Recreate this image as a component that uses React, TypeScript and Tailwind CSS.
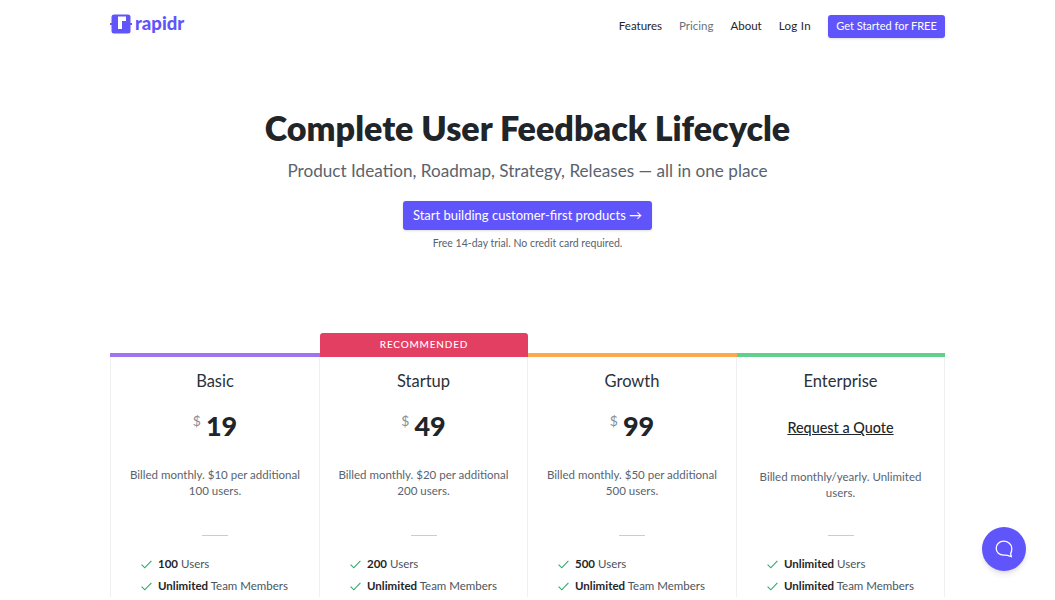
import React from 'react';

const plans = [
  { name: 'Basic', price: '19', bar: 'bg-[#a074ef]', note: 'Billed monthly. $10 per additional 100 users.', users: '100' },
  { name: 'Startup', price: '49', bar: 'bg-[#e33f63]', note: 'Billed monthly. $20 per additional 200 users.', users: '200', recommended: true },
  { name: 'Growth', price: '99', bar: 'bg-[#fba94c]', note: 'Billed monthly. $50 per additional 500 users.', users: '500' },
  { name: 'Enterprise', price: '', bar: 'bg-[#62d08d]', note: 'Billed monthly/yearly. Unlimited users.', users: 'Unlimited' },
];

const Check = () => (
  <svg width="11" height="9" viewBox="0 0 11 9" fill="none" className="shrink-0">
    <path d="M0.6 4.6 L3.8 7.8 L10.4 0.8" stroke="#2fa86b" strokeWidth="1.1" />
  </svg>
);

const Feature = ({ bold, rest }: { bold: string; rest: string }) => (
  <div className="flex items-center h-[22px] text-[11.5px] text-[#4a5560]">
    <Check />
    <span className="ml-[6px]">
      <b className="font-bold text-[#1f2529]">{bold}</b> {rest}
    </span>
  </div>
);

const Logo = () => (
  <svg width="22" height="20" viewBox="0 0 22 20" className="shrink-0">
    <rect x="1.5" y="0.5" width="19" height="19" rx="2.5" fill="#5f55fb" />
    <path d="M0 9 h2 v2 h-2 z M20 9 h2 v2 h-2 z" fill="#5f55fb" />
    <path d="M8 15 V2.5 H16 V7 H12 V15 Z" fill="#ffffff" />
  </svg>
);

export default function App() {
  return (
    <div className="relative h-[600px] overflow-hidden bg-white font-['Lato','Liberation_Sans',sans-serif] text-[#1f2529]">
      <div className="mx-auto w-[835px]">
        <header className="flex items-center justify-between h-[52px]">
          <div className="flex items-center gap-[3px] -mt-[5px]">
            <Logo />
            <span className="text-[18.5px] font-black leading-none text-[#5f55fb]">rapidr</span>
          </div>
          <nav className="flex items-center text-[11.5px]">
            <a className="mr-[17px]">Features</a>
            <a className="mr-[17px] text-[#68737d]">Pricing</a>
            <a className="mr-[17px]">About</a>
            <a className="mr-[17px] tracking-[0.3px]">Log In</a>
            <a className="flex items-center justify-center w-[117px] h-[23px] rounded-[3px] bg-[#5f55fb] text-[11px] text-white shadow-sm">
              Get Started for FREE
            </a>
          </nav>
        </header>

        <section className="flex flex-col items-center pt-[55px]">
          <h1 className="text-[34.1px] leading-[42px] font-extrabold text-[#1f2529]">Complete User Feedback Lifecycle</h1>
          <p className="mt-[10px] text-[17.15px] leading-[24px] text-[#59636e]">
            Product Ideation, Roadmap, Strategy, Releases — all in one place
          </p>
          <a className="mt-[18px] flex items-center justify-center w-[249px] h-[29px] rounded-[3px] bg-[#5f55fb] text-[13px] text-white shadow-sm">
            Start building customer-first products →
          </a>
          <p className="mt-[5px] text-[10.5px] leading-[16px] text-[#59636e]">Free 14-day trial. No credit card required.</p>
        </section>

        <section className="grid grid-cols-[210px_208px_209px_208px] mt-[102px]">
          {plans.map((p, i) => (
            <div key={p.name} className="relative">
              <div className={`h-[4px] ${p.bar}`} />
              {p.recommended && (
                <div className="absolute left-0 right-0 -top-[20px] h-[24px] pb-[2px] flex items-center justify-center rounded-t-[3px] bg-[#e33f63] text-[10px] font-medium tracking-[0.8px] text-white">
                  RECOMMENDED
                </div>
              )}
              <div className={`border-r border-[#eef0f2] ${i === 0 ? 'border-l' : ''}`}>
                <div className="flex flex-col items-center pt-[13px]">
                  <h3 className="text-[16.5px] leading-[22px] text-[#2a323a]">{p.name}</h3>
                  {p.price ? (
                    <div className="mt-[17px] h-[32px] flex items-start">
                      <span className="text-[14px] leading-[18px] mt-[3px] text-[#858e96] mr-[5px]">$</span>
                      <span className="text-[27px] leading-[34px] font-black text-[#1f2529]">{p.price}</span>
                    </div>
                  ) : (
                    <a className="mt-[20px] h-[32px] flex items-center text-[14.4px] font-medium underline text-[#1f2529]">Request a Quote</a>
                  )}
                  <p className={`${p.price ? 'mt-[26px]' : 'mt-[25px]'} w-[180px] text-center text-[11.5px] leading-[16px] text-[#59636e]`}>{p.note}</p>
                  <div className={`${p.price ? 'mt-[36px]' : 'mt-[34px]'} w-[26px] h-px bg-[#c9cdd1]`} />
                </div>
                <div className="pl-[30px] pt-[17px]">
                  <Feature bold={p.users} rest="Users" />
                  <Feature bold="Unlimited" rest="Team Members" />
                </div>
              </div>
            </div>
          ))}
        </section>
      </div>

      <div className="absolute left-[982px] top-[527px] w-[44px] h-[44px] rounded-full bg-[#5f55fb] shadow-md flex items-center justify-center">
        <svg width="18" height="18" viewBox="0 0 18 18" fill="none">
          <path d="M8.7 1.2 C4.4 1.2 1.2 4.3 1.2 8.3 C1.2 12.3 4.4 15.2 8.7 15.2 C10.6 15.2 12.4 15 14 15.8 L16.3 16.6 L15.6 13.6 C16.4 12.4 16.8 10.4 16.8 8.3 C16.8 4.3 13 1.2 8.7 1.2 Z" stroke="#ffffff" strokeWidth="1.3" />
        </svg>
      </div>
    </div>
  );
}
